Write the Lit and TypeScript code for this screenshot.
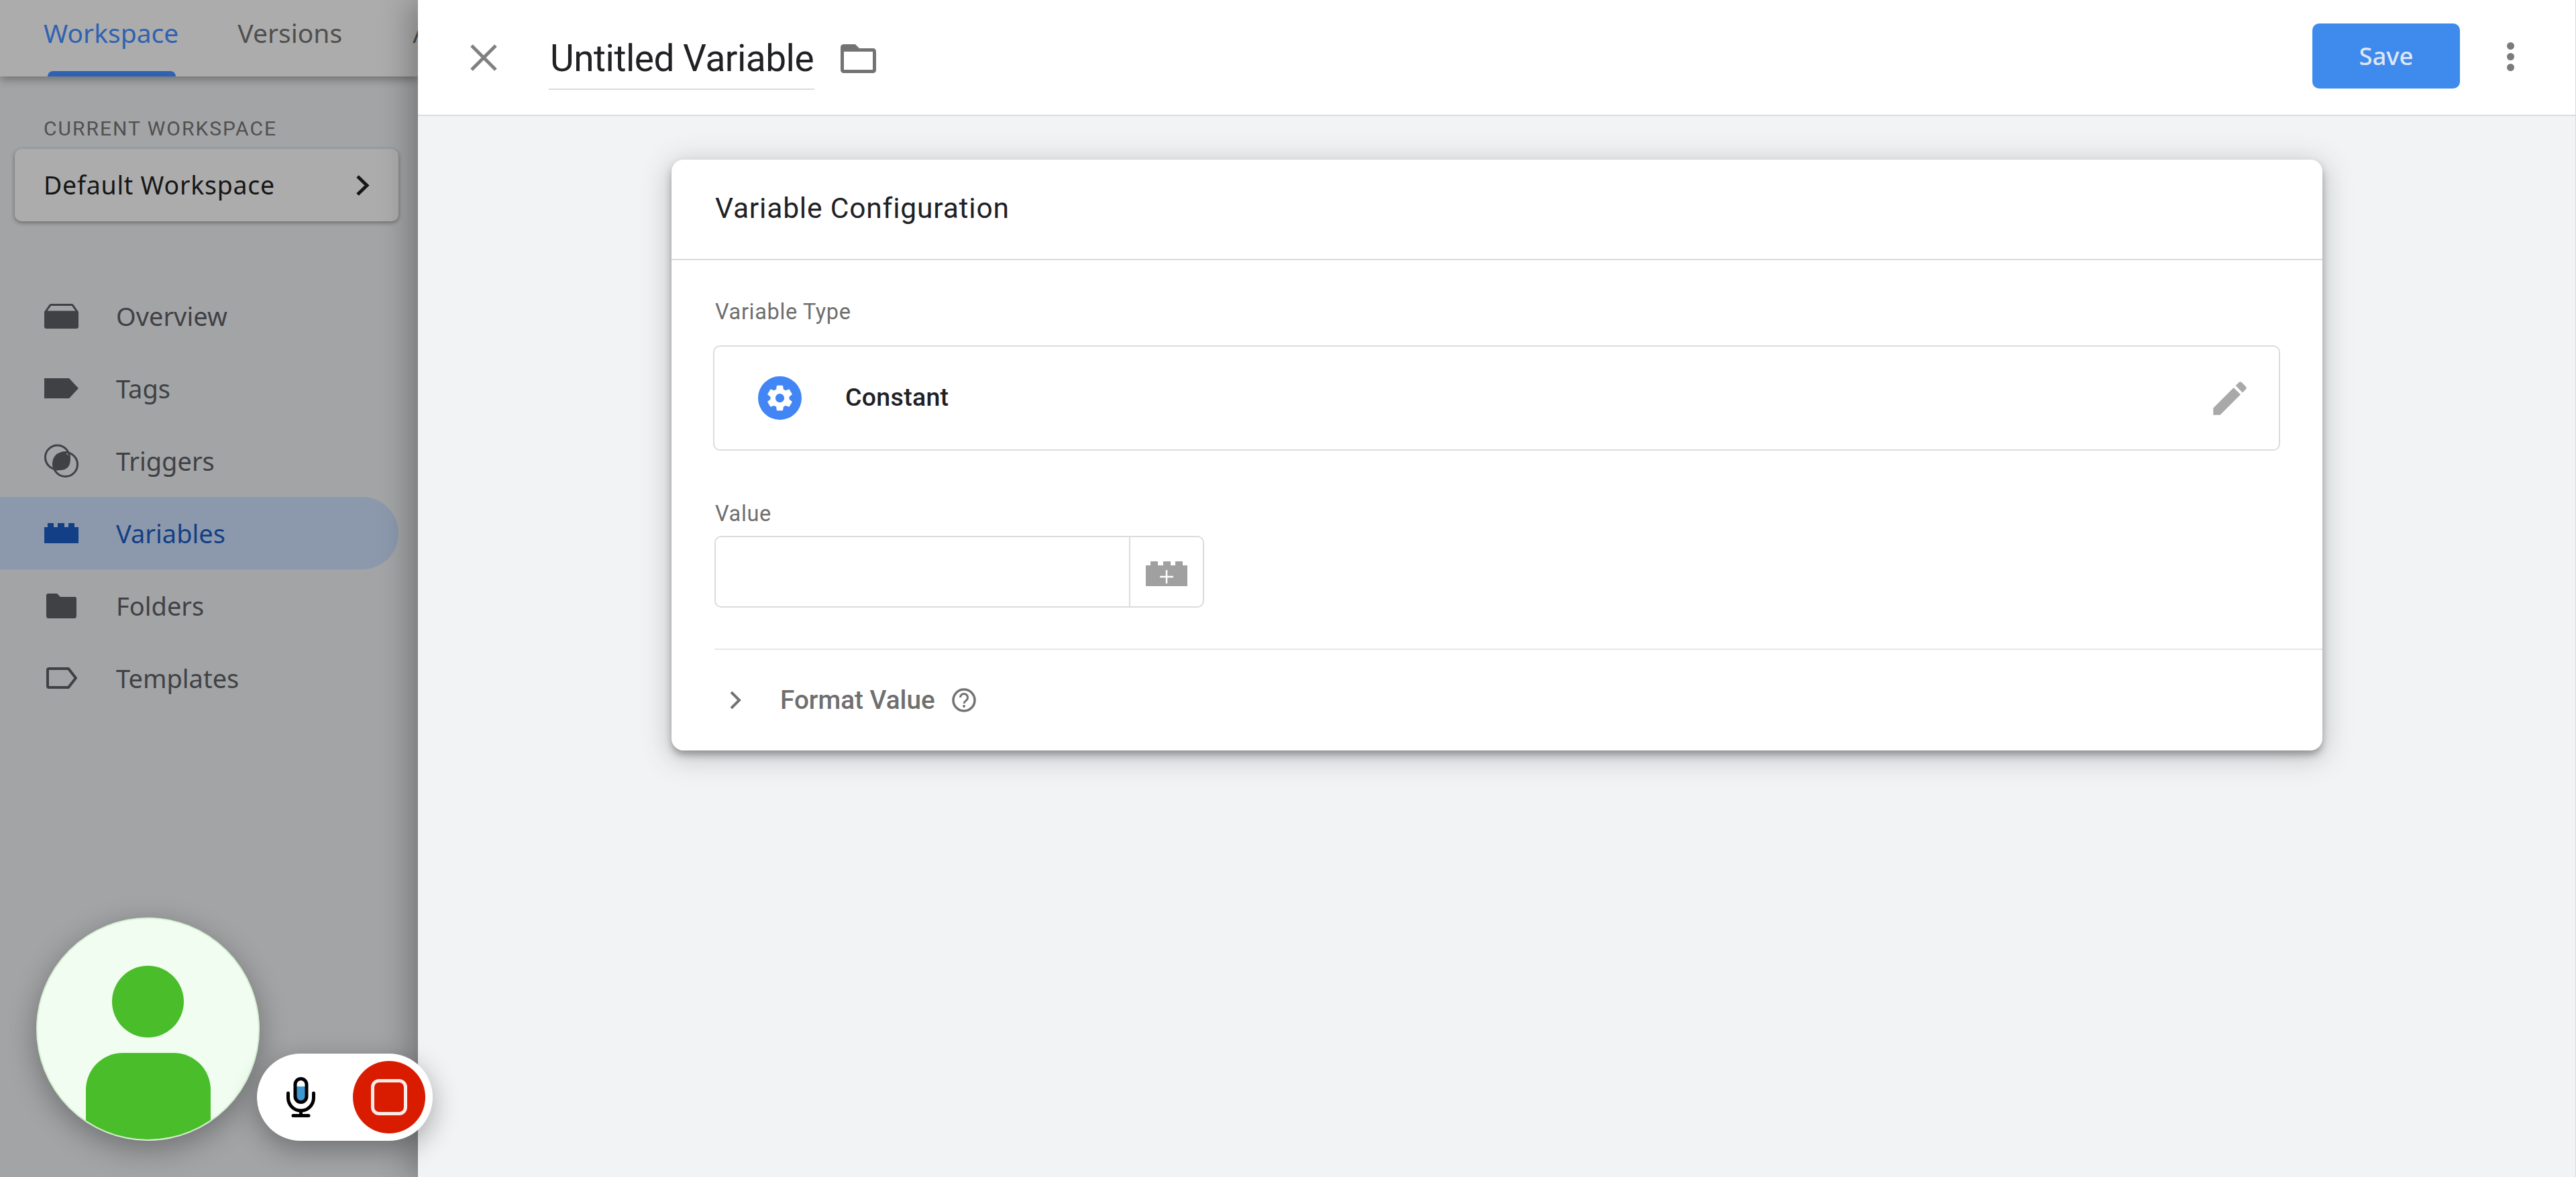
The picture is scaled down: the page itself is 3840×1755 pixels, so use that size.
import { LitElement, html, css, svg } from "lit";
import { customElement } from "lit/decorators.js";

const ICONS: Record<string, unknown> = {
  overview: svg`<svg class="ic" viewBox="0 0 51 37" width="51" height="37"><path fill="currentColor" d="M10 0H41Q43 0 44 2L51 12V34Q51 37 48 37H3Q0 37 0 34V12L7 2Q8 0 10 0ZM10 3 4.500 10.500H46.500L41 3Z"/></svg>`,
  tags: svg`<svg class="ic" viewBox="0 0 51 30" width="51" height="30"><path fill="currentColor" d="M0 0H37L51 15 37 30H0Z"/></svg>`,
  triggers: svg`<svg class="ic" viewBox="0 0 51 51" width="51" height="51"><circle cx="19.500" cy="20" r="18" fill="none" stroke="currentColor" stroke-width="3"/><circle cx="31.500" cy="30.500" r="18" fill="none" stroke="currentColor" stroke-width="3"/><path fill="currentColor" d="M13 31C10.500 20 20 10 30 13 40 17 41 28 35 35 30 40 17 42 13 31Z"/></svg>`,
  variables: svg`<svg class="ic" viewBox="0 0 51 30" width="51" height="30"><path fill="currentColor" d="M0 6H5V0H14V6H20V0H30V6H36V0H45V6H51V30H0Z"/></svg>`,
  folders: svg`<svg class="ic" viewBox="0 0 51 37" width="51" height="37"><path fill="currentColor" d="M6 0H19L24 5H46Q48 5 48 8V33Q48 37 45 37H6Q3 37 3 33V3Q3 0 6 0Z"/></svg>`,
  templates: svg`<svg class="ic" viewBox="0 0 51 32" width="51" height="32"><path fill="none" stroke="currentColor" stroke-width="4" stroke-linejoin="round" d="M7 2H36L47 16 36 30H7Q5 30 5 28V4Q5 2 7 2Z"/></svg>`,
};

@customElement("app-root")
export class AppRoot extends LitElement {
  static styles = css`
    :host { display: block; height: 100vh; position: relative; overflow: hidden; font-family: Roboto, sans-serif; }
    .app { display: flex; height: 100%; }

    .side { width: 623px; flex: none; background: #a3a4a6; overflow: hidden; display: flex; flex-direction: column; }
    .tabs { height: 114px; flex: none; background: #acacac; display: flex; box-shadow: 0 5px 12px rgba(0,0,0,.3); padding-left: 65px; gap: 88px; white-space: nowrap; position: relative; }
    .tab { font: 400 39px/98px "Noto Sans", sans-serif; color: #4f4f4f; position: relative; }
    .tab.on { color: #2f62b2; }
    .tab.on::after { content: ""; position: absolute; left: 6px; right: 4px; bottom: 0; height: 8px; background: #2f62b2; border-radius: 8px 8px 0 0; }
    .tab.last { margin-left: 17px; }

    .cap { font: 400 30px/30px Roboto, sans-serif; letter-spacing: 2px; color: #505050; padding: 63px 0 0 65px; }
    .ws { margin: 15px 29px 0 22px; height: 108px; flex: none; background: #acacac; border-radius: 10px; box-shadow: 0 2px 6px rgba(0,0,0,.38); display: flex; align-items: center; justify-content: space-between; padding: 0 43px; box-sizing: border-box; font: 400 37.500px/104px "Noto Sans", sans-serif; letter-spacing: .75px; color: #161616; }
    .ws svg { display: block; }

    nav { margin-top: 87px; display: flex; flex-direction: column; }
    .row { height: 108px; width: 594px; box-sizing: border-box; padding-left: 66px; display: flex; align-items: center; color: #3f4145; border-radius: 0 54px 54px 0; font: 400 38px/106px "Noto Sans", sans-serif; }
    .row.on { background: #8c99ad; color: #123f85; }
    .ic-box { width: 107px; flex: none; display: flex; align-items: center; }
    .ic { display: block; }

    .panel { flex: 1; min-width: 0; background: #f1f3f4; border-right: 1px solid #d9dadc; display: flex; flex-direction: column; position: relative; z-index: 1; box-shadow: -10px 0 44px rgba(0,0,0,.3); }
    .bar { height: 173px; flex: none; box-sizing: border-box; background: #fff; border-bottom: 2px solid #dadce0; display: flex; align-items: center; padding: 0 91px 0 78px; }
    .x { display: block; }
    .title { margin: 28px 0 0 77px; width: 396px; height: 69px; box-sizing: border-box; border-bottom: 2.500px solid #dadce0; font: 400 55px/44px Roboto, sans-serif; color: #202124; padding: 0 2px; letter-spacing: -.5px; white-space: nowrap; }
    .fold { margin: 4px 0 0 39px; display: block; }
    .save { margin: -4px 0 0 auto; width: 220px; height: 97px; border-radius: 10px; background: #3e8bed; color: #e0e6f3; display: flex; align-items: center; justify-content: center; font: 500 36.500px/97px "Noto Sans", sans-serif; }
    .dots { margin: -3px 0 0 70px; display: flex; flex-direction: column; gap: 5px; }
    .dots i { width: 11px; height: 11px; border-radius: 50%; background: #7b7b7b; display: block; }

    .card { margin: 65px 377px 0 378px; background: #fff; border-radius: 18px; box-shadow: 0 7px 12px -1px rgba(60,64,67,.46), 0 8px 40px 4px rgba(60,64,67,.26); display: flex; flex-direction: column; }
    .card h2 { margin: 0; height: 150px; box-sizing: border-box; border-bottom: 2px solid #dadce0; padding-left: 65px; font: 400 42.500px/146px Roboto, sans-serif; color: #202124; letter-spacing: .82px; }
    .lab { font: 400 32.500px/36px Roboto, sans-serif; color: #6f6f6f; padding-left: 65px; letter-spacing: .65px; }
    .l1 { margin-top: 59px; }
    .type { margin: 32px 63px 0 62px; height: 157px; box-sizing: border-box; border: 2.500px solid #dadce0; border-radius: 10px; display: flex; align-items: center; padding-left: 65px; }
    .gear { width: 65px; height: 65px; border-radius: 50%; background: #4285f4; flex: none; display: flex; align-items: center; justify-content: center; }
    .type b { margin: -3px 0 0 65px; font: 500 37.500px/42px Roboto, sans-serif; color: #202124; letter-spacing: .3px; }
    .pen { margin-left: auto; margin-right: 40px; display: block; }
    .l2 { margin-top: 76px; }
    .val { margin: 15px 0 0 64px; width: 730px; height: 107px; box-sizing: border-box; border: 2.500px solid #dadce0; border-radius: 10px; display: flex; }
    .val span { flex: 1; border-right: 2.500px solid #dadce0; }
    .val div { width: 108px; display: flex; align-items: center; justify-content: center; padding-top: 6px; box-sizing: border-box; }
    .fmt { margin: 61px 0 0 64px; border-top: 2.500px solid #e6e7ea; height: 152px; display: flex; align-items: center; box-sizing: border-box; padding-left: 23px; }
    .fmt strong { margin-left: 58px; font: 500 38.700px/40px Roboto, sans-serif; color: #6f6f6f; }
    .q { margin-left: 25px; display: block; }

    .avatar { position: absolute; left: 54px; top: 1368px; width: 333px; height: 333px; box-sizing: border-box; border-radius: 50%; background: #f0fdf0; border: 2px solid #d6efd3; overflow: hidden; z-index: 2; }
    .shadow { position: absolute; left: 54px; top: 1368px; width: 333px; height: 333px; border-radius: 50%; box-shadow: 0 12px 44px rgba(0,0,0,.32); z-index: 2; }
    .head { position: absolute; left: 111px; top: 70px; width: 107px; height: 107px; border-radius: 50%; background: #4abd2a; }
    .body { position: absolute; left: 72px; top: 200px; width: 186px; height: 150px; border-radius: 55px 55px 0 0; background: #4abd2a; }
    .pill { position: absolute; left: 383px; top: 1571px; width: 262px; height: 130px; border-radius: 65px; background: #fff; box-shadow: 0 12px 40px rgba(0,0,0,.32); z-index: 3; display: flex; align-items: center; padding: 0 11px 0 44px; box-sizing: border-box; justify-content: space-between; }
    .stop { width: 108px; height: 108px; border-radius: 50%; background: #d91c00; display: flex; align-items: center; justify-content: center; }
    .stop i { width: 54px; height: 54px; box-sizing: border-box; border: 5px solid #fbeae7; border-radius: 12px; display: block; }
  `;

  render() {
    const rows = [
      ["overview", "Overview"], ["tags", "Tags"], ["triggers", "Triggers"],
      ["variables", "Variables"], ["folders", "Folders"], ["templates", "Templates"],
    ];
    return html`
      <div class="app">
        <aside class="side">
          <div class="tabs">
            <div class="tab on">Workspace</div>
            <div class="tab">Versions</div>
            <div class="tab last">Admin</div>
          </div>
          <div class="cap">CURRENT WORKSPACE</div>
          <div class="ws">
            <span>Default Workspace</span>
            <svg width="21" height="31" viewBox="0 0 21 31"><path d="M3 2 17 15.500 3 29" fill="none" stroke="#161616" stroke-width="5"/></svg>
          </div>
          <nav>
            ${rows.map(([k, t]) => html`<div class="row ${k === "variables" ? "on" : ""}"><span class="ic-box">${ICONS[k]}</span>${t}</div>`)}
          </nav>
        </aside>
        <main class="panel">
          <header class="bar">
            <svg class="x" width="40" height="40" viewBox="0 0 40 40"><path d="M2 2 38 38M38 2 2 38" stroke="#808080" stroke-width="5"/></svg>
            <div class="title">Untitled Variable</div>
            <svg class="fold" width="53" height="43" viewBox="0 0 53 43"><path fill="#737373" fill-rule="evenodd" d="M5 0H22L28 6H48Q53 6 53 11V38Q53 43 48 43H5Q0 43 0 38V5Q0 0 5 0ZM5 11V38H48V11Z"/></svg>
            <div class="save">Save</div>
            <div class="dots"><i></i><i></i><i></i></div>
          </header>
          <section class="card">
            <h2>Variable Configuration</h2>
            <div class="lab l1">Variable Type</div>
            <div class="type">
              <span class="gear"><svg width="45" height="45" viewBox="0 0 24 24"><path fill="#fff" d="M19.430 12.980c.04-.32.07-.64.07-.98s-.03-.66-.07-.98l2.110-1.650c.19-.15.24-.42.12-.64l-2-3.460c-.12-.22-.39-.3-.61-.22l-2.490 1c-.52-.4-1.080-.73-1.690-.98l-.38-2.650C14.460 2.180 14.250 2 14 2h-4c-.25 0-.46.18-.49.420l-.38 2.650c-.61.25-1.170.59-1.690.98l-2.490-1c-.23-.09-.49 0-.61.220l-2 3.460c-.13.220-.07.490.12.640l2.110 1.650c-.04.320-.07.650-.07.980s.03.660.07.980l-2.110 1.650c-.19.150-.24.420-.12.640l2 3.460c.12.220.39.300.61.220l2.490-1c.52.400 1.080.730 1.690.980l.38 2.650c.03.240.24.420.49.420h4c.25 0 .46-.18.49-.42l.38-2.650c.61-.25 1.170-.59 1.690-.98l2.490 1c.23.090.49 0 .61-.22l2-3.460c.12-.22.07-.49-.12-.64l-2.110-1.650zM12 15.500c-1.930 0-3.500-1.570-3.500-3.500s1.570-3.500 3.500-3.500 3.500 1.570 3.500 3.500-1.570 3.500-3.500 3.500z"/></svg></span>
              <b>Constant</b>
              <svg class="pen" width="66" height="66" viewBox="0 0 24 24"><path fill="#a9a9a9" d="M3 17.250V21h3.750L17.810 9.940l-3.750-3.750L3 17.250zM20.710 7.040c.39-.39.390-1.020 0-1.410l-2.340-2.340c-.39-.39-1.020-.39-1.410 0l-1.830 1.830 3.750 3.750 1.830-1.830z"/></svg>
            </div>
            <div class="lab l2">Value</div>
            <div class="val">
              <span></span>
              <div><svg width="62" height="37" viewBox="0 0 62 37"><path fill="#a0a0a0" d="M0 6H7V0H18V6H26V0H37V6H44V0H55V6H62V37H0Z"/><path d="M31 13V33M21 23H41" stroke="#fff" stroke-width="2.500"/></svg></div>
            </div>
            <div class="fmt">
              <svg width="17" height="26" viewBox="0 0 17 26"><path d="M2 1 14 13 2 25" fill="none" stroke="#737373" stroke-width="4"/></svg>
              <strong>Format Value</strong>
              <svg class="q" width="36" height="36" viewBox="0 0 36 36"><circle cx="18" cy="18" r="16" fill="none" stroke="#737373" stroke-width="3.500"/><path d="M12.500 14a5.500 5.500 0 1 1 8.800 4.400C19.500 19.800 18 20.800 18 23" fill="none" stroke="#737373" stroke-width="3"/><circle cx="18" cy="27" r="2" fill="#737373"/></svg>
            </div>
          </section>
        </main>
      </div>
      <div class="shadow"></div>
      <div class="avatar"><div class="head"></div><div class="body"></div></div>
      <div class="pill">
        <svg width="43" height="60" viewBox="0 0 43 60"><rect x="13" y="2.500" width="17" height="35" rx="8.500" fill="#fff"/><path d="M13 14H30V29a8.500 8.500 0 0 1-17 0Z" fill="#3f97d1"/><rect x="13" y="2.500" width="17" height="35" rx="8.500" fill="none" stroke="#000" stroke-width="5"/><path d="M2.500 24V31A19 19 0 0 0 40.500 31V24M21.500 50V57M10 57.500H33" fill="none" stroke="#000" stroke-width="5" stroke-linecap="round"/></svg>
        <div class="stop"><i></i></div>
      </div>
    `;
  }
}
